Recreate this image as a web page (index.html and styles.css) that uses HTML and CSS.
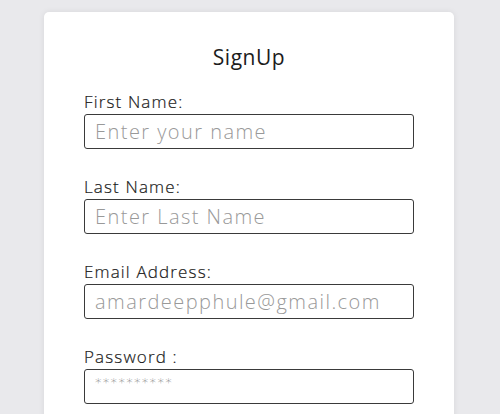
FILE: index.html
```html
<!DOCTYPE html>
<html>
<head>
<meta charset="utf-8">
<link rel="stylesheet" href="styles.css">
</head>
<body>
<div class="page">
  <form class="card">
    <h1 class="title">SignUp</h1>
    <div class="field">
      <label class="label">First Name:</label>
      <input class="input" type="text" placeholder="Enter your name">
    </div>
    <div class="field">
      <label class="label">Last Name:</label>
      <input class="input" type="text" placeholder="Enter Last Name">
    </div>
    <div class="field">
      <label class="label">Email Address:</label>
      <input class="input" type="text" placeholder="amardeepphule@gmail.com">
    </div>
    <div class="field">
      <label class="label">Password :</label>
      <input class="input input-pass" type="password" placeholder="**********">
    </div>
  </form>
</div>
</body>
</html>
```
FILE: styles.css
```css
html, body {
  margin: 0;
  padding: 0;
  height: 100%;
  overflow: hidden;
}
body {
  background: #e9e9ec;
  font-family: "Open Sans", "Lato", sans-serif;
  color: #222;
}
.page {
  display: flex;
  padding-top: 12px;
  padding-left: 44px;
  padding-right: 46px;
}
.card {
  flex: 1;
  background: #ffffff;
  border-radius: 5px;
  box-shadow: 0 0 6px rgba(0,0,0,0.08);
  padding: 30px 40px 40px;
  min-height: 420px;
  box-sizing: border-box;
}
.title {
  margin: 0 0 20px;
  text-align: center;
  font-size: 21px;
  font-weight: 400;
  line-height: 30px;
  letter-spacing: 0.5px;
  color: #1c1c1c;
}
.field {
  display: flex;
  flex-direction: column;
  margin-bottom: 28px;
}
.label {
  font-size: 17px;
  line-height: 20px;
  margin-bottom: 2px;
  font-weight: 300;
  color: #1a1a1a;
  letter-spacing: 1.15px;
  -webkit-text-stroke: 0.2px #1a1a1a;
}
.input {
  box-sizing: border-box;
  width: 100%;
  height: 35px;
  margin: 0;
  border: 1.5px solid #3a3a3a;
  border-radius: 3px;
  padding: 0 10px;
  font-family: inherit;
  font-size: 20px;
  font-weight: 300;
  letter-spacing: 1.45px;
  background: #fff;
  outline: none;
}
.input::placeholder {
  color: #999999;
  opacity: 1;
}
.input-pass,
.input-pass::placeholder {
  font-family: "DejaVu Sans", sans-serif;
  font-size: 13px;
  letter-spacing: 1.3px;
}
.input-pass::placeholder {
  color: #7a7a7a;
}
.input-pass {
  padding-bottom: 9px;
}
```
